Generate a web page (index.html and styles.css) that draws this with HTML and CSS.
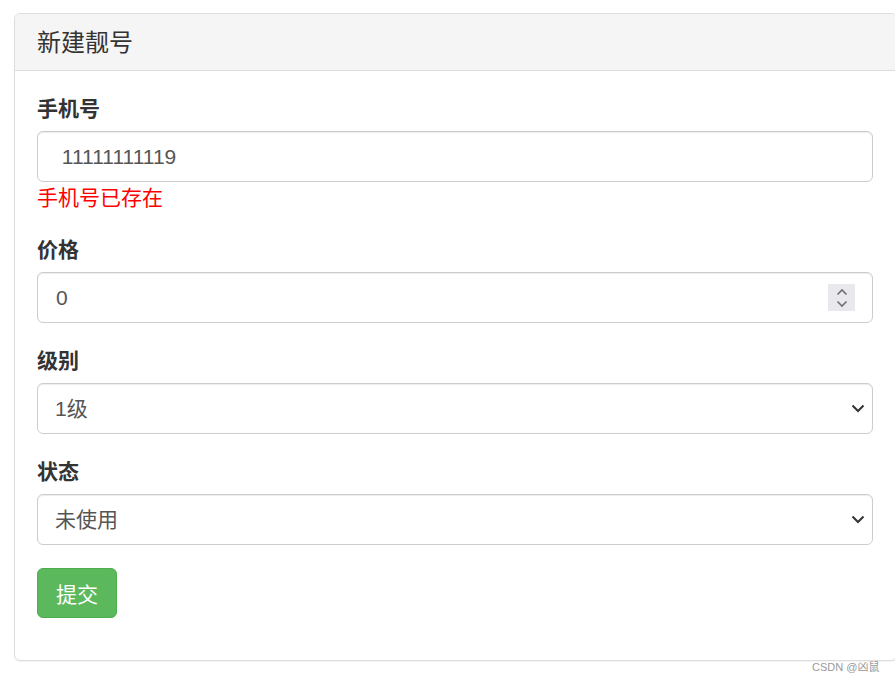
FILE: index.html
```html
<!DOCTYPE html>
<html lang="zh">
<head>
<meta charset="utf-8">
<title>新建靓号</title>
<link rel="stylesheet" href="styles.css">
</head>
<body>
<div class="page">
  <div class="panel">
    <div class="panel-heading">
      <h3 class="panel-title">新建靓号</h3>
    </div>
    <div class="panel-body">
      <form class="form">
        <div class="form-group">
          <label class="label">手机号</label>
          <input class="form-control" type="text" value=" 11111111119">
          <span class="error">手机号已存在</span>
        </div>
        <div class="form-group">
          <label class="label">价格</label>
          <div class="number-wrap">
            <input class="form-control" type="text" value="0">
            <span class="spinner">
              <svg width="14" height="22" viewBox="0 0 14 22"><path d="M2.5 7.5 L7 3 L11.5 7.5" fill="none" stroke="#707070" stroke-width="1.6"/><path d="M2.5 14.5 L7 19 L11.5 14.5" fill="none" stroke="#707070" stroke-width="1.6"/></svg>
            </span>
          </div>
        </div>
        <div class="form-group">
          <label class="label">级别</label>
          <div class="select-wrap">
            <select class="form-control select"><option>1级</option></select>
            <svg class="chev" width="14" height="9" viewBox="0 0 14 9"><path d="M1.5 1.5 L7 7 L12.5 1.5" fill="none" stroke="#333" stroke-width="2"/></svg>
          </div>
        </div>
        <div class="form-group">
          <label class="label">状态</label>
          <div class="select-wrap">
            <select class="form-control select"><option>未使用</option></select>
            <svg class="chev" width="14" height="9" viewBox="0 0 14 9"><path d="M1.5 1.5 L7 7 L12.5 1.5" fill="none" stroke="#333" stroke-width="2"/></svg>
          </div>
        </div>
        <button type="button" class="btn">提交</button>
      </form>
    </div>
  </div>
</div>
<div class="watermark">CSDN @凶鼠</div>
</body>
</html>
```
FILE: styles.css
```css
html, body {
  margin: 0;
  padding: 0;
  background: #fff;
  overflow: hidden;
}
body {
  font-family: "Liberation Sans", "Noto Sans CJK SC", sans-serif;
  font-size: 21px;
  line-height: 1.42857;
  color: #333;
  width: 895px;
  height: 682px;
  position: relative;
}
.page {
  padding: 13px 0 0 14px;
}
.panel {
  width: 883px;
  box-sizing: border-box;
  border: 1px solid #ddd;
  border-radius: 6px;
  background: #fff;
  box-shadow: 0 1px 1px rgba(0,0,0,.05);
}
.panel-heading {
  background: #f5f5f5;
  border-bottom: 1px solid #ddd;
  border-radius: 5px 5px 0 0;
  padding: 16px 22px 14px;
}
.panel-title {
  margin: 0;
  font-size: 24px;
  line-height: 26.4px;
  font-weight: normal;
  color: #333;
}
.panel-body {
  padding: 22.5px 23px 42px 22px;
}
.form {
  margin: 0;
}
.form-group {
  margin-bottom: 22.5px;
}
.label {
  display: block;
  font-weight: bold;
  margin-bottom: 7.5px;
  height: 30px;
  line-height: 30px;
}
.form-control {
  display: block;
  width: 100%;
  height: 51px;
  box-sizing: border-box;
  padding: 9px 18px;
  font-family: "Liberation Sans", "Noto Sans CJK SC", sans-serif;
  font-size: 21px;
  line-height: 1.42857;
  color: #555;
  background: #fff;
  border: 1px solid #ccc;
  border-radius: 6px;
  box-shadow: inset 0 1px 1px rgba(0,0,0,.075);
  margin: 0;
  outline: none;
}
.error {
  display: block;
  color: #f00;
  height: 30px;
  line-height: 32px;
}
.number-wrap, .select-wrap {
  position: relative;
}
.spinner {
  position: absolute;
  right: 18px;
  top: 12px;
  width: 27px;
  height: 27px;
  background: #e9e9ed;
  display: flex;
  align-items: center;
  justify-content: center;
}
.select {
  appearance: none;
  -webkit-appearance: none;
  padding-left: 17px;
}
.chev {
  position: absolute;
  right: 8px;
  top: 21px;
  pointer-events: none;
}
.btn {
  display: block;
  height: 50px;
  padding: 0 18px;
  font-family: "Liberation Sans", "Noto Sans CJK SC", sans-serif;
  font-size: 21px;
  color: #fff;
  background: #5cb85c;
  border: 1px solid #4cae4c;
  border-radius: 6px;
  cursor: pointer;
}
.watermark {
  position: absolute;
  left: 812px;
  top: 660px;
  font-size: 11px;
  color: #999;
  font-family: "Liberation Sans", "Noto Sans CJK SC", sans-serif;
}
```
